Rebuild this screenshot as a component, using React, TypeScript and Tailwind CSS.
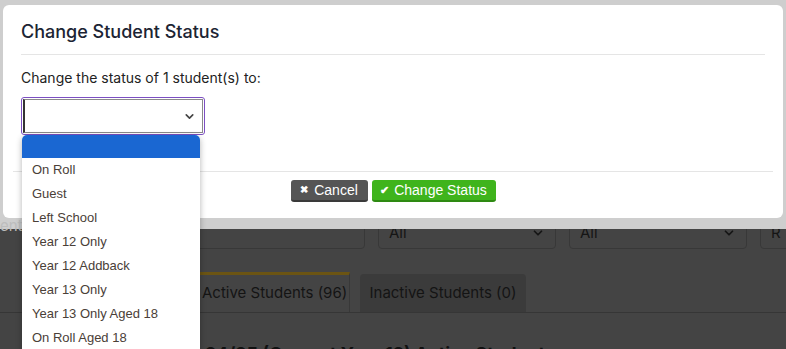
import { ChevronDown } from 'lucide-react';

const statuses = [
  'On Roll',
  'Guest',
  'Left School',
  'Year 12 Only',
  'Year 12 Addback',
  'Year 13 Only',
  'Year 13 Only Aged 18',
  'On Roll Aged 18',
];

function DarkSelect({ width, label }: { width: string; label: string }) {
  return (
    <div className={`${width} h-[38px] shrink-0 rounded-[4px] border border-[#383838] flex items-center justify-between px-[10px] pt-[6px] text-[15px] text-[#151515]`}>
      <span>{label}</span>
      <ChevronDown className="w-[14px] h-[14px] text-[#151515]" strokeWidth={3} />
    </div>
  );
}

export default function App() {
  return (
    <div
      className="relative w-[786px] h-[349px] overflow-hidden bg-[#444444]"
      style={{ fontFamily: 'Inter, "Liberation Sans", sans-serif' }}
    >
      {/* Page behind the backdrop */}
      <div className="pt-[211px]">
        <div className="flex gap-[13px] pl-[22px]">
          <div className="w-[343px] h-[38px] shrink-0 rounded-[4px] border border-[#383838]" />
          <DarkSelect width="w-[178px]" label="All" />
          <DarkSelect width="w-[178px]" label="All" />
          <DarkSelect width="w-[60px]" label="R" />
        </div>

        <div className="flex items-end mt-[24px] h-[40px] border-b border-[#363636]">
          <div className="w-[180px]" />
          <div className="w-[170px] h-[40px] border-t-[3px] border-t-[#6b5413] border-r border-r-[#383838] flex items-center pl-[22px] text-[15px] text-[#141414]">
            Active Students (96)
          </div>
          <div className="ml-[10px] w-[166px] h-[38px] bg-[#3b3b3b] rounded-t-[4px] flex items-center justify-center text-[15px] text-[#141414]">
            Inactive Students (0)
          </div>
        </div>

        <div className="pl-[205px] pt-[30px] text-[18px] leading-[22px] font-bold text-[#111111] whitespace-nowrap">
          24/25 (Current Year 12) Active Students
        </div>
      </div>

      {/* Light band at the top of the backdrop */}
      <div className="absolute left-0 top-0 w-full h-[229px] bg-[#cecece]">
        <span className="absolute left-0 top-[218px] text-[15px] text-[#bdbdbd] leading-none">ents</span>
      </div>

      {/* Modal */}
      <div className="absolute left-[3px] top-[5px] w-[780px] h-[213px] bg-white rounded-[6px]">
        <div className="mx-[18px] pt-[16px] pb-[11px] border-b border-[#e5e5e5]">
          <h2 className="text-[18px] font-medium text-[#1c2433] leading-[22px]">Change Student Status</h2>
        </div>
        <div className="px-[18px] pt-[13px] pb-[36px]">
          <p className="text-[14px] text-[#222] leading-[20px]">Change the status of 1 student(s) to:</p>
          <div className="mt-[9px] w-[184px] h-[38px] rounded-[3px] border-[1.5px] border-[#7c4fc2] p-[1px]">
            <div className="w-full h-full border border-[#8a8a8a] border-l-[2px] border-l-[#333] flex items-center justify-end pr-[6px]">
              <ChevronDown className="w-[13px] h-[13px] text-[#444]" strokeWidth={3} />
            </div>
          </div>
        </div>
        <div className="mx-[10px] border-t border-[#e5e5e5] pt-[8px] flex justify-center gap-[4px]">
          <button
            className="h-[22px] w-[77px] rounded-[3px] bg-[#555555] border-b-[2px] border-b-[#3a3a3a] text-white text-[14px] flex items-center justify-center gap-[6px]"
            style={{ fontFamily: '"Liberation Sans", Arial, sans-serif' }}
          >
            <span className="text-[10px] font-bold leading-none">✖</span>
            Cancel
          </button>
          <button
            className="h-[22px] w-[124px] rounded-[3px] bg-[#3fb41c] border-b-[2px] border-b-[#2e8a12] text-white text-[14px] flex items-center justify-center gap-[5px]"
            style={{ fontFamily: '"Liberation Sans", Arial, sans-serif' }}
          >
            <span className="text-[11px] font-bold leading-none">✔</span>
            Change Status
          </button>
        </div>
      </div>

      {/* Open native dropdown list */}
      <div
        className="absolute left-[22px] top-[135px] w-[178px] h-[220px] bg-white rounded-[5px] overflow-hidden shadow-[0_2px_6px_rgba(0,0,0,0.3)]"
        style={{ fontFamily: '"Liberation Sans", Arial, sans-serif' }}
      >
        <div className="h-[23px] bg-[#1a67d2]" />
        {statuses.map((s) => (
          <div key={s} className="h-[24px] flex items-center pl-[10px] text-[13px] text-[#4a4038]">
            {s}
          </div>
        ))}
      </div>
    </div>
  );
}
